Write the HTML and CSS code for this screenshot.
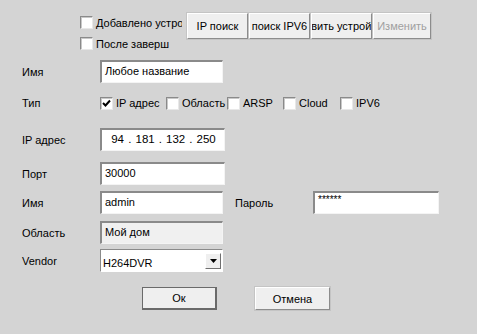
FILE: index.html
```html
<!DOCTYPE html>
<html lang="ru">
<head>
    <meta charset="UTF-8">
    <title>Добавить устройство</title>
    <link rel="stylesheet" href="styles.css">
</head>
<body>

<div class="dialog">
    <!-- Верхняя часть: опции и кнопки поиска -->
    <div class="top">
        <div class="options">
            <label class="opt opt-wide"><span class="box"></span>Добавлено устройство</label>
            <label class="opt opt-narrow"><span class="box"></span>После завершения</label>
        </div>
        <div class="tools">
            <button class="btn tool"><span>IP поиск</span></button>
            <button class="btn tool"><span>поиск IPV6</span></button>
            <button class="btn tool tool-add"><span>Добавить устройство</span></button>
            <button class="btn tool tool-last" disabled><span>Изменить</span></button>
        </div>
    </div>

    <!-- Форма устройства -->
    <div class="form">
        <div class="row row-name">
            <span class="label">Имя</span>
            <div class="field">Любое название</div>
        </div>

        <div class="row row-type">
            <span class="label">Тип</span>
            <div class="types">
                <label class="type t-ip"><span class="box checked"><svg width="9" height="9" viewBox="0 0 9 9"><path d="M1 4 L3.5 6.5 L8 1.5" fill="none" stroke="#000" stroke-width="2"/></svg></span>IP адрес</label>
                <label class="type t-area"><span class="box"></span>Область</label>
                <label class="type t-arsp"><span class="box"></span>ARSP</label>
                <label class="type t-cloud"><span class="box"></span>Cloud</label>
                <label class="type t-ipv6"><span class="box"></span>IPV6</label>
            </div>
        </div>

        <div class="row row-ip">
            <span class="label">IP адрес</span>
            <div class="field field-ip">
                <span class="oct oct-first">94</span><span class="dot">.</span>
                <span class="oct">181</span><span class="dot">.</span>
                <span class="oct">132</span><span class="dot">.</span>
                <span class="oct">250</span>
            </div>
        </div>

        <div class="row row-port">
            <span class="label">Порт</span>
            <div class="field field-wide">30000</div>
        </div>

        <div class="row row-user">
            <span class="label">Имя</span>
            <div class="field">admin</div>
            <span class="label label-pass">Пароль</span>
            <div class="field field-pass">******</div>
        </div>

        <div class="row row-area">
            <span class="label">Область</span>
            <div class="field field-disabled">Мой дом</div>
        </div>

        <div class="row row-vendor">
            <span class="label">Vendor</span>
            <div class="field field-select">
                <span>H264DVR</span>
                <span class="drop"><svg width="7" height="4" viewBox="0 0 7 4"><path d="M0 0 H7 L3.5 4 Z" fill="#000"/></svg></span>
            </div>
        </div>
    </div>

    <div class="actions">
        <button class="btn btn-default">Ок</button>
        <button class="btn btn-cancel">Отмена</button>
    </div>
</div>

</body>
</html>
```

FILE: styles.css
```css
body {
    margin: 0;
    padding: 0;
    background-color: #d4d4d4;
    font-family: 'Liberation Sans', Arial, sans-serif;
    font-size: 11px;
    color: #000;
}

.dialog {
    width: 477px;
    height: 334px;
}

/* верх */
.top {
    display: flex;
    padding: 12px 0 0 80px;
    height: 42px;
}

.options {
    display: flex;
    flex-direction: column;
}

.opt {
    display: flex;
    align-items: center;
    height: 21px;
    white-space: nowrap;
    overflow: hidden;
}

.opt-wide { width: 102px; }
.opt-narrow { width: 89px; }

.box {
    display: inline-flex;
    align-items: center;
    justify-content: center;
    flex: none;
    box-sizing: border-box;
    width: 13px;
    height: 13px;
    margin-right: 3px;
    background-color: #fff;
    border-top: 1px solid #8a8a8a;
    border-left: 1px solid #8a8a8a;
    border-right: 1px solid #e8e8e8;
    border-bottom: 1px solid #e8e8e8;
    box-shadow: inset 1px 1px 0 #c8c8c8;
}

.tools {
    display: flex;
    margin: 1px 0 0 5px;
}

.btn {
    font-family: inherit;
    font-size: 11px;
    color: #000;
    background-color: #efefef;
    border-top: 1px solid #fff;
    border-left: 1px solid #fff;
    border-right: 1px solid #8c8c8c;
    border-bottom: 1px solid #8c8c8c;
    box-shadow: 0 0 0 1px #c4c4c4;
    padding: 0;
    white-space: nowrap;
    overflow: hidden;
}

.tool {
    display: flex;
    align-items: center;
    justify-content: center;
    width: 61px;
    height: 26px;
    margin-right: 1px;
}

.tool span {
    flex: none;
}

/* текст не помещается, видна только середина */
.tool-add span {
    margin-right: 4px;
}

.tool-last { width: 58px; }

.btn:disabled {
    color: #a0a0a0;
}

/* форма */
.form {
    margin-top: 6px;
    padding-left: 22px;
}

.row {
    display: flex;
    align-items: center;
}

.label {
    width: 78px;
    flex: none;
}

.field {
    box-sizing: border-box;
    width: 123px;
    height: 23px;
    padding: 3px 0 0 3px;
    background-color: #fff;
    border-top: 2px solid #8a8a8a;
    border-left: 2px solid #8a8a8a;
    border-right: 1px solid #f4f4f4;
    border-bottom: 1px solid #f4f4f4;
    white-space: nowrap;
}

.field-wide,
.field-ip { width: 125px; }

.field-ip {
    display: flex;
    padding-left: 0;
    font-size: 11.5px;
}

.oct { width: 19px; text-align: center; flex: none; }
.oct-first { width: 22px; text-align: right; }
.dot { width: 11.5px; text-align: center; flex: none; }

.row-type { height: 26px; margin-top: 7px; }
.row-ip { margin-top: 12px; }
.row-port { margin-top: 11px; }
.row-user { margin-top: 6px; }
.row-area { margin-top: 7px; }
.row-vendor { margin-top: 5px; }

.types {
    display: flex;
    align-items: center;
}

.type {
    display: flex;
    align-items: center;
    white-space: nowrap;
}

.t-ip { width: 66px; }
.t-area { width: 61px; }
.t-arsp { width: 56px; }
.t-cloud { width: 57px; }

.label-pass {
    width: 78px;
    margin-left: 12px;
}

.field-pass {
    width: 126px;
    padding-top: 1px;
    font-size: 10px;
}

.field-disabled {
    background-color: #f0f0f0;
}

.field-select {
    display: flex;
    align-items: flex-end;
    justify-content: space-between;
    padding: 0 1px 2px 2px;
    border-top: 1px solid #8a8a8a;
    border-left: 1px solid #8a8a8a;
    border-right: 1px solid #fff;
    border-bottom: 1px solid #fff;
}

.drop {
    display: flex;
    align-items: center;
    justify-content: center;
    width: 16px;
    height: 16px;
    background-color: #efefef;
    border-top: 1px solid #fff;
    border-left: 1px solid #fff;
    border-right: 1px solid #707070;
    border-bottom: 1px solid #707070;
    box-sizing: border-box;
}

/* кнопки внизу */
.actions {
    display: flex;
    margin: 15px 0 0 142px;
}

.actions .btn {
    width: 75px;
    height: 23px;
}

.btn-default {
    border: 1px solid #6a6a6a;
    border-right-width: 2px;
    border-bottom-width: 2px;
    box-shadow: none;
}

.btn-cancel {
    margin-left: 38px;
}
```
